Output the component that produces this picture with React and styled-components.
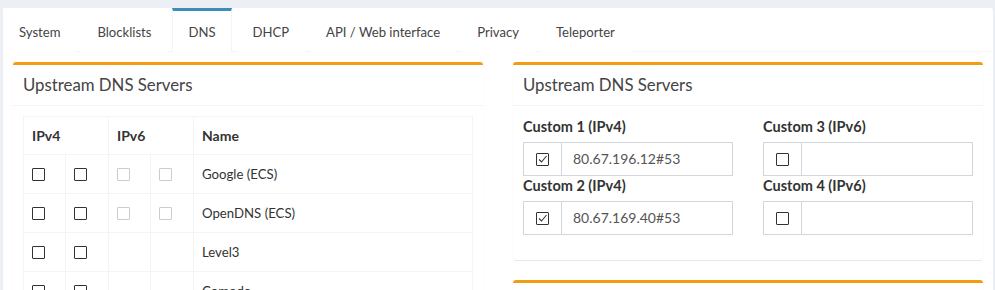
import styled, { createGlobalStyle } from "styled-components";

const TABS = ["System", "Blocklists", "DNS", "DHCP", "API / Web interface", "Privacy", "Teleporter"];

const UPSTREAMS = [
  { name: "Google (ECS)", v6: "disabled" },
  { name: "OpenDNS (ECS)", v6: "disabled" },
  { name: "Level3", v6: "none" },
  { name: "Comodo", v6: "none" },
  { name: "DNS.WATCH", v6: "enabled" },
  { name: "Quad9 (filtered, DNSSEC)", v6: "enabled" },
];

const CUSTOM = [
  [
    { label: "Custom 1 (IPv4)", value: "80.67.196.12#53", checked: true },
    { label: "Custom 2 (IPv4)", value: "80.67.169.40#53", checked: true },
  ],
  [
    { label: "Custom 3 (IPv6)", value: "", checked: false },
    { label: "Custom 4 (IPv6)", value: "", checked: false },
  ],
];

const CHECK_WIDTHS = [42, 43, 42, 43];

const GlobalStyle = createGlobalStyle`
  * { box-sizing: border-box; }
  body {
    margin: 0;
    background: #ecf0f5;
    font-family: Lato, "Open Sans", sans-serif;
    font-size: 14px;
    color: #333;
  }
`;

function Checkbox({ checked, disabled }) {
  return (
    <CheckBox $disabled={disabled}>
      {checked && (
        <svg width="11" height="11" viewBox="0 0 11 11">
          <path d="M2 5.5 L4.5 8 L9.5 2" fill="none" stroke="#333" strokeWidth="1.1" />
        </svg>
      )}
    </CheckBox>
  );
}

export default function App() {
  return (
    <Page>
      <GlobalStyle />
      <Card>
        <TabList>
          {TABS.map((t) => (
            <Tab key={t} $active={t === "DNS"}>
              {t}
            </Tab>
          ))}
        </TabList>
        <TabContent>
          <Column>
            <Box>
              <BoxHeader>
                <BoxTitle>Upstream DNS Servers</BoxTitle>
              </BoxHeader>
              <BoxBody>
                <Table>
                  <thead>
                    <tr>
                      <th colSpan={2}>IPv4</th>
                      <th colSpan={2}>IPv6</th>
                      <th>Name</th>
                    </tr>
                  </thead>
                  <tbody>
                    {UPSTREAMS.map((u) => (
                      <tr key={u.name}>
                        {CHECK_WIDTHS.map((w, i) => (
                          <CheckCell key={i} $width={w}>
                            {(i < 2 || u.v6 !== "none") && (
                              <Checkbox disabled={i >= 2 && u.v6 === "disabled"} />
                            )}
                          </CheckCell>
                        ))}
                        <NameCell>{u.name}</NameCell>
                      </tr>
                    ))}
                  </tbody>
                </Table>
              </BoxBody>
            </Box>
          </Column>
          <Column>
            <Box>
              <BoxHeader>
                <BoxTitle>Upstream DNS Servers</BoxTitle>
              </BoxHeader>
              <BoxBody>
                <FieldGrid>
                  {CUSTOM.map((col, i) => (
                    <FieldColumn key={i}>
                      {col.map((f) => (
                        <div key={f.label}>
                          <Label>{f.label}</Label>
                          <InputGroup>
                            <Addon>
                              <Checkbox checked={f.checked} />
                            </Addon>
                            <Input>{f.value}</Input>
                          </InputGroup>
                        </div>
                      ))}
                    </FieldColumn>
                  ))}
                </FieldGrid>
              </BoxBody>
            </Box>
            <Box>
              <BoxHeader>
                <BoxTitle>Interface settings</BoxTitle>
              </BoxHeader>
              <BoxBody />
            </Box>
          </Column>
        </TabContent>
      </Card>
    </Page>
  );
}

const Page = styled.div`
  padding: 8px 2px 0 3px;
`;

const Card = styled.div`
  background: #fff;
  border-radius: 3px;
  box-shadow: 0 1px 1px rgba(0, 0, 0, 0.1);
`;

const TabList = styled.div`
  display: flex;
  gap: 5px;
  border-bottom: 1px solid #f4f4f4;
`;

const Tab = styled.div`
  border-top: 3px solid ${(p) => (p.$active ? "#3c8dbc" : "transparent")};
  border-left: 1px solid ${(p) => (p.$active ? "#f4f4f4" : "transparent")};
  border-right: 1px solid ${(p) => (p.$active ? "#f4f4f4" : "transparent")};
  margin-bottom: -1px;
  padding: 11px 15px 10px;
  font-size: 13.1px;
  line-height: 20px;
  color: #444;
  background: #fff;
  white-space: nowrap;
`;

const TabContent = styled.div`
  display: grid;
  grid-template-columns: 1fr 1fr;
  column-gap: 30px;
  align-items: start;
  padding: 10px;
`;

const Column = styled.div`
  display: flex;
  flex-direction: column;
  gap: 20px;
`;

const Box = styled.div`
  background: #fff;
  border-top: 3px solid #f39c12;
  border-radius: 3px;
  box-shadow: 0 1px 1px rgba(0, 0, 0, 0.1);
`;

const BoxHeader = styled.div`
  padding: 10px;
  border-bottom: 1px solid #f4f4f4;
`;

const BoxTitle = styled.h3`
  margin: 0;
  font-size: 16.8px;
  line-height: 20px;
  font-weight: 400;
  color: #444;
`;

const BoxBody = styled.div`
  padding: 10px;
`;

const Table = styled.table`
  width: 100%;
  border-collapse: collapse;
  border: 1px solid #f4f4f4;

  th,
  td {
    border: 1px solid #f4f4f4;
    padding: 8px;
    text-align: left;
    vertical-align: middle;
  }
  th {
    line-height: 21px;
    font-weight: 700;
  }
  td {
    line-height: 22px;
  }
`;

const CheckCell = styled.td`
  width: ${(p) => p.$width}px;
  font-size: 0;
`;

const NameCell = styled.td`
  font-size: 13.2px;
`;

const CheckBox = styled.span`
  display: inline-flex;
  align-items: center;
  justify-content: center;
  width: 13px;
  height: 13px;
  border: 1px solid ${(p) => (p.$disabled ? "#ccc" : "#333")};
  border-radius: 1px;
  background: #fff;
  vertical-align: middle;
`;

const FieldGrid = styled.div`
  display: grid;
  grid-template-columns: 1fr 1fr;
  column-gap: 30px;
  padding: 1px 0 15px;
`;

const FieldColumn = styled.div`
  display: flex;
  flex-direction: column;
`;

const Label = styled.label`
  display: block;
  font-size: 14.5px;
  font-weight: 700;
  line-height: 20px;
  margin-bottom: 5px;
`;

const InputGroup = styled.div`
  display: flex;
  height: 34px;
`;

const Addon = styled.div`
  width: 39px;
  display: flex;
  align-items: center;
  justify-content: center;
  border: 1px solid #d2d6de;
`;

const Input = styled.div`
  flex: 1;
  border: 1px solid #d2d6de;
  border-left: none;
  padding: 6px 11px;
  line-height: 20px;
  color: #555;
`;
